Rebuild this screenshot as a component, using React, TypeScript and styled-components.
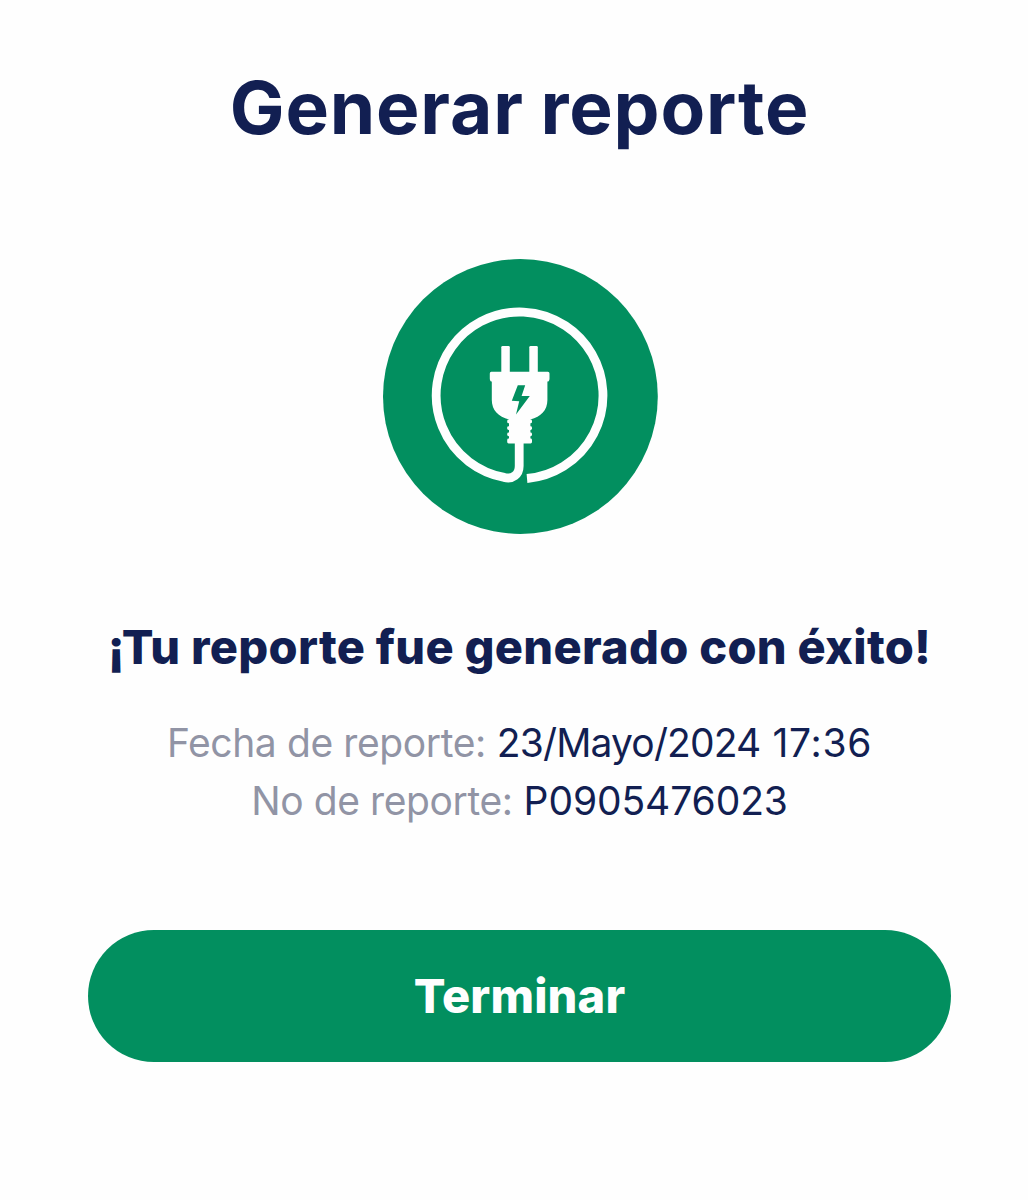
import React from "react";
import styled, { createGlobalStyle } from "styled-components";

const navy = "#121f52";
const green = "#028f5f";
const grey = "#9194a5";

const GlobalStyle = createGlobalStyle`
  *, *::before, *::after { box-sizing: border-box; }
  body { margin: 0; background: #fefefe; }
`;

const Screen = styled.main`
  display: flex;
  flex-direction: column;
  align-items: center;
  width: 1028px;
  height: 1200px;
  padding: 64px 77px 0 88px;
  background: #fefefe;
  color: ${navy};
  font-family: Inter, "Liberation Sans", sans-serif;
  white-space: nowrap;
`;

const Title = styled.h1`
  margin: 0;
  font-size: 73px;
  font-weight: 700;
  line-height: 88px;
  letter-spacing: 0.85px;
  word-spacing: -1.5px;
`;

const Badge = styled.svg`
  display: block;
  flex: none;
  width: 275px;
  height: 275px;
  margin-top: 107px;
  margin-left: 2px;
`;

const Message = styled.h2`
  margin: 84px 0 0;
  font-size: 47px;
  font-weight: 800;
  line-height: 58px;
  letter-spacing: 0.28px;
`;

const Details = styled.dl`
  display: flex;
  flex-direction: column;
  align-items: center;
  margin: 38px 0 0;
  font-size: 39px;
  line-height: 58px;
`;

const Detail = styled.div`
  display: flex;
  gap: 11px;
`;

const Label = styled.dt`
  color: ${grey};
  letter-spacing: -0.4px;
`;

const Value = styled.dd`
  display: flex;
  gap: 12px;
  margin: 0;
`;

const Part = styled.span<{ $tracking: number }>`
  letter-spacing: ${({ $tracking }) => $tracking}px;
`;

const Button = styled.button`
  width: 100%;
  height: 132px;
  margin-top: 100px;
  padding: 0 0 2px;
  border: 0;
  border-radius: 66px;
  background: ${green};
  color: #fefefe;
  font: inherit;
  font-size: 47px;
  font-weight: 800;
  letter-spacing: 0.15px;
`;

const PlugBadge = () => (
  <Badge viewBox="383 259 275 275" aria-hidden="true">
    <circle cx="520.4" cy="396.5" r="137.4" fill={green} />
    <g fill="none" stroke="#fefefe" strokeWidth="8.8">
      <path d="M527 478.5A83.4 83.4 0 1 0 504.2 477.4C512.5 479.8 519.2 474.5 519.2 466V440" />
    </g>
    <g fill="#fefefe">
      <rect x="501.3" y="346" width="8.5" height="30" rx="1.3" />
      <rect x="529.3" y="346" width="8.5" height="30" rx="1.3" />
      <path d="M491.3 371.8H547.9Q549.5 371.8 549.5 373.4V378.5Q549.5 381.6 547.4 381.6V400C547.4 410 541 417 530.4 419.5V443H509V419.5C498.4 417 491.8 410 491.8 400V381.6Q489.8 381.6 489.8 378.5V373.4Q489.8 371.8 491.3 371.8Z" />
      <rect x="507.2" y="419.5" width="24.8" height="3.8" rx="1.4" />
      <rect x="507.2" y="426.2" width="24.8" height="3.8" rx="1.4" />
      <rect x="507.2" y="432.6" width="24.8" height="3.6" rx="1.4" />
      <rect x="507.2" y="438.6" width="24.8" height="4.8" rx="1.4" />
    </g>
    <path d="M517.8 385.2H525.2L521.6 396H529.8L516 414.4L519.2 401.2L511.8 400.8Z" fill={green} />
  </Badge>
);

const details = [
  {
    label: "Fecha de reporte:",
    parts: [
      { text: "23/Mayo/2024", tracking: -0.85 },
      { text: "17:36", tracking: 0.7 },
    ],
  },
  {
    label: "No de reporte:",
    parts: [{ text: "P0905476023", tracking: -0.1 }],
  },
];

export default function App() {
  return (
    <>
      <GlobalStyle />
      <Screen>
        <Title>Generar reporte</Title>
        <PlugBadge />
        <Message>¡Tu reporte fue generado con éxito!</Message>
        <Details>
          {details.map(({ label, parts }) => (
            <Detail key={label}>
              <Label>{label}</Label>
              <Value>
                {parts.map(({ text, tracking }) => (
                  <Part key={text} $tracking={tracking}>
                    {text}
                  </Part>
                ))}
              </Value>
            </Detail>
          ))}
        </Details>
        <Button type="button">Terminar</Button>
      </Screen>
    </>
  );
}
